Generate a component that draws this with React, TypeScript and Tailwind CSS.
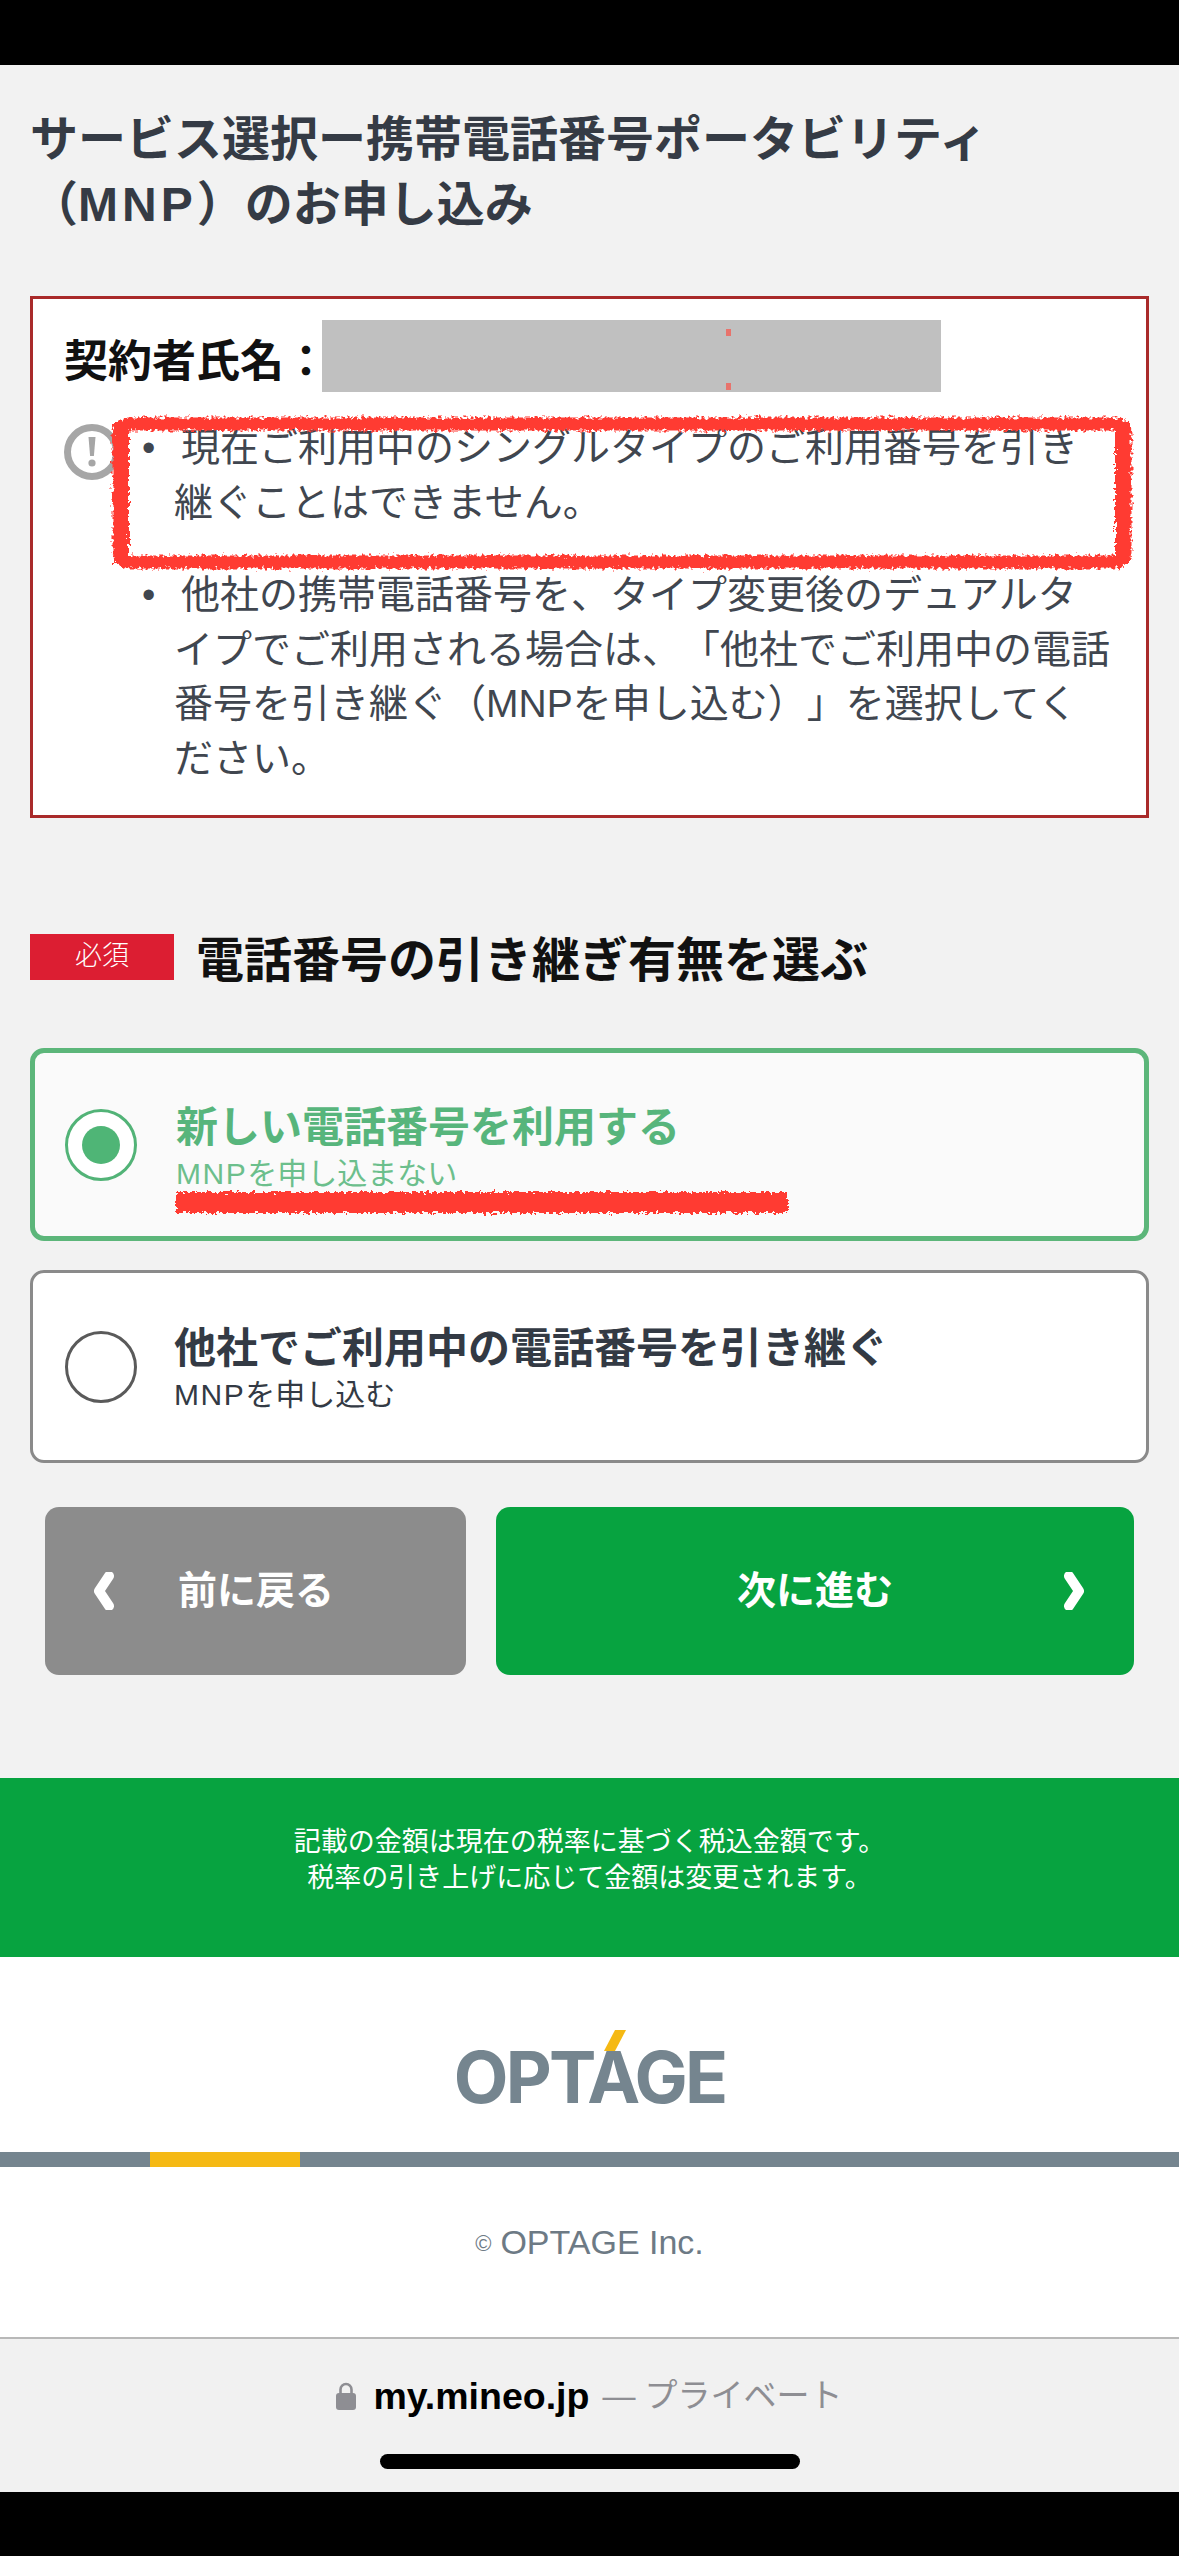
import React from 'react'

const FONT = '[font-family:"Liberation_Sans","Noto_Sans_CJK_JP",sans-serif] [text-spacing-trim:space-all]'

const RoughFilter = ({ id }: { id: string }) => (
    <filter id={id} x="-5%" y="-40%" width="110%" height="180%">
        <feTurbulence type="fractalNoise" baseFrequency="0.3" numOctaves={2} seed={4} />
        <feDisplacementMap in="SourceGraphic" scale={9} xChannelSelector="R" yChannelSelector="G" />
        <feGaussianBlur stdDeviation="0.7" />
    </filter>
)

const RadioRow = ({ selected, title, sub }: { selected?: boolean; title: string; sub: string }) => (
    <div className={`relative h-[193px] rounded-[14px] flex items-center ${selected ? 'border-[5px] border-[#5cb67a] bg-[#fafafa] pl-[30px]' : 'border-[3px] border-[#8a8a8a] bg-white pl-[32px]'}`}>
        <div className={`w-[72px] h-[72px] rounded-full flex items-center justify-center shrink-0 bg-white ${selected ? 'border-[3px] border-[#52b377]' : 'border-[3px] border-[#5a5a5a]'}`}>
            {selected && <div className="w-[38px] h-[38px] rounded-full bg-[#4fb576]" />}
        </div>
        <div className={selected ? 'ml-[39px] mt-[7px] text-[#57b57c]' : 'ml-[37px] mt-[4px] text-[#333a44]'}>
            <p className="text-[42px] leading-[52px] font-bold whitespace-nowrap">{title}</p>
            <p className={`text-[30px] leading-[40px] whitespace-nowrap ${selected ? 'text-[#6cbf8c]' : ''}`}>
                <span className="tracking-[1.5px]">MNP</span>{sub}
            </p>
        </div>
        {selected && (
            <svg className="absolute left-[135px] top-[134px]" width="630" height="38" viewBox="0 0 630 38">
                <defs><RoughFilter id="rough-line" /></defs>
                <rect x="6" y="5" width="612" height="21" fill="#ff3b30" filter="url(#rough-line)" />
            </svg>
        )}
    </div>
)

export default function App() {
    return (
        <div lang="ja" className={`w-[1179px] h-[2556px] flex flex-col bg-[#f2f2f2] overflow-hidden ${FONT}`}>
            <div className="h-[65px] bg-black shrink-0" />

            <div className="px-[30px]">
                <h1 className="pt-[42px] text-[48px] leading-[65px] font-bold text-[#353b45] whitespace-nowrap">
                    サービス選択ー携帯電話番号ポータビリティ<br />（<span className="tracking-[4px]">MNP</span>）のお申し込み
                </h1>

                <div className="relative mt-[59px] h-[522px] border-[3px] border-[#a92a2a] bg-white pt-[21px] pl-[31px]">
                    <div className="flex items-center h-[72px]">
                        <span className="mt-[12px] text-[44px] font-bold text-[#111] w-[258px] whitespace-nowrap">契約者氏名：</span>
                        <div className="relative w-[619px] h-[72px] bg-[#c0c0c0]">
                            <span className="absolute left-[404px] top-[9px] w-[5px] h-[7px] bg-[#e8736c]" />
                            <span className="absolute left-[404px] top-[63px] w-[5px] h-[7px] bg-[#e8736c]" />
                        </div>
                    </div>

                    <div className="flex mt-[29px]">
                        <svg width="56" height="56" viewBox="0 0 56 56" className="shrink-0 mt-[3px]">
                            <circle cx="28" cy="28" r="24.5" fill="none" stroke="#a6a6a6" strokeWidth="7" />
                            <path d="M24.5 13h7l-1.6 19h-3.8z" fill="#a6a6a6" />
                            <circle cx="28" cy="39" r="3.6" fill="#a6a6a6" />
                        </svg>
                        <ul className="ml-[22px] text-[39px] leading-[54.5px] text-[#40464f] whitespace-nowrap">
                            <li className="flex">
                                <span className="w-[32px] text-[38px]">•</span>
                                <p className="indent-[7px]">現在ご利用中のシングルタイプのご利用番号を引き<br />継ぐことはできません。</p>
                            </li>
                            <li className="flex mt-[38px]">
                                <span className="w-[32px] text-[38px]">•</span>
                                <p className="indent-[7px]">他社の携帯電話番号を、タイプ変更後のデュアルタ<br /><span className="block indent-0">イプでご利用される場合は、「他社でご利用中の電話</span><span className="block indent-0">番号を引き継ぐ（MNPを申し込む）」を選択してく</span><span className="block indent-0">ださい。</span></p>
                            </li>
                        </ul>
                    </div>

                    <svg className="absolute left-[72px] top-[112px]" width="1036" height="164" viewBox="0 0 1036 164">
                        <defs><RoughFilter id="rough-box" /></defs>
                        <g filter="url(#rough-box)">
                            <rect x="14" y="13" width="1006" height="138" rx="10" fill="none" stroke="#ff3b30" strokeWidth="13" />
                            <rect x="9" y="12" width="15" height="140" fill="#ff3b30" />
                            <rect x="1010" y="12" width="15" height="140" fill="#ff3b30" />
                        </g>
                    </svg>
                </div>

                <div className="flex mt-[113px] h-[60px]">
                    <div className="w-[144px] h-[46px] mt-[3px] bg-[#dc1e32] text-white text-[27px] font-light flex items-center justify-center shrink-0 pb-[2px]">必須</div>
                    <h2 className="ml-[22px] text-[48px] leading-[60px] font-bold text-[#111] whitespace-nowrap">電話番号の引き継ぎ有無を選ぶ</h2>
                </div>

                <div className="mt-[57px] flex flex-col gap-[29px]">
                    <RadioRow selected title="新しい電話番号を利用する" sub="を申し込まない" />
                    <RadioRow title="他社でご利用中の電話番号を引き継ぐ" sub="を申し込む" />
                </div>

                <div className="mt-[44px] mx-[15px] flex gap-[30px] h-[168px]">
                    <button className="w-[421px] rounded-[14px] bg-[#8c8c8c] text-white text-[39px] font-bold flex items-center pl-[47px]">
                        <svg width="24" height="38" viewBox="0 0 24 38"><path d="M17 4 L7 19 L17 34" fill="none" stroke="#fff" strokeWidth="10" strokeLinejoin="round" strokeLinecap="round" /></svg>
                        <span className="ml-[62px]">前に戻る</span>
                    </button>
                    <button className="flex-1 rounded-[14px] bg-[#07a340] text-white text-[39px] font-bold flex items-center pl-[72px] pr-[48px]">
                        <span className="flex-1 text-center">次に進む</span>
                        <svg width="24" height="38" viewBox="0 0 24 38"><path d="M7 4 L17 19 L7 34" fill="none" stroke="#fff" strokeWidth="10" strokeLinejoin="round" strokeLinecap="round" /></svg>
                    </button>
                </div>
            </div>

            <div className="mt-[103px] h-[179px] bg-[#07a340] text-white text-[27px] leading-[36px] text-center pt-[46px] shrink-0">
                <p>記載の金額は現在の税率に基づく税込金額です。</p>
                <p>税率の引き上げに応じて金額は変更されます。</p>
            </div>

            <div className="h-[195px] bg-white flex justify-center items-start pt-[87px] shrink-0">
                <div className="relative h-[66px] flex items-center">
                    <span className="text-[71px] leading-[66px] font-bold tracking-[-2.8px] text-[#75858f] [font-family:Inter,sans-serif]">OPTAGE</span>
                    <svg className="absolute left-[149px] -top-[15px]" width="24" height="24" viewBox="0 0 24 24">
                        <polygon points="12,1 23,1 12,22 1,22" fill="#f5b914" />
                    </svg>
                </div>
            </div>

            <div className="h-[15px] bg-[#75858f] pl-[150px] shrink-0">
                <div className="w-[150px] h-full bg-[#f5b914]" />
            </div>

            <div className="h-[170px] bg-white flex items-start justify-center pt-[52px] text-[#6d7a85] shrink-0">
                <span className="text-[34px] leading-[46px] font-light"><span className="text-[22px] align-[3px] mr-[9px]">©</span>OPTAGE Inc.</span>
            </div>

            <div className="h-[155px] bg-[#f1f1f1] border-t-2 border-[#b8b8b8] flex flex-col items-center shrink-0">
                <div className="mt-[35px] h-[44px] flex items-center">
                    <svg width="20" height="28" viewBox="0 0 20 28" className="mr-[17px]">
                        <rect x="0" y="11" width="20" height="17" rx="3" fill="#8e8e93" />
                        <path d="M4.5 12V7.5a5.5 5.5 0 0 1 11 0V12" fill="none" stroke="#8e8e93" strokeWidth="2.6" />
                    </svg>
                    <span className="text-[37.5px] font-bold text-black">my.mineo.jp</span>
                    <span className="ml-[13px] text-[33px] text-[#8e8e93] whitespace-nowrap">— プライベート</span>
                </div>
                <div className="mt-[36px] w-[420px] h-[15px] rounded-full bg-black" />
            </div>

            <div className="flex-1 bg-black" />
        </div>
    )
}
